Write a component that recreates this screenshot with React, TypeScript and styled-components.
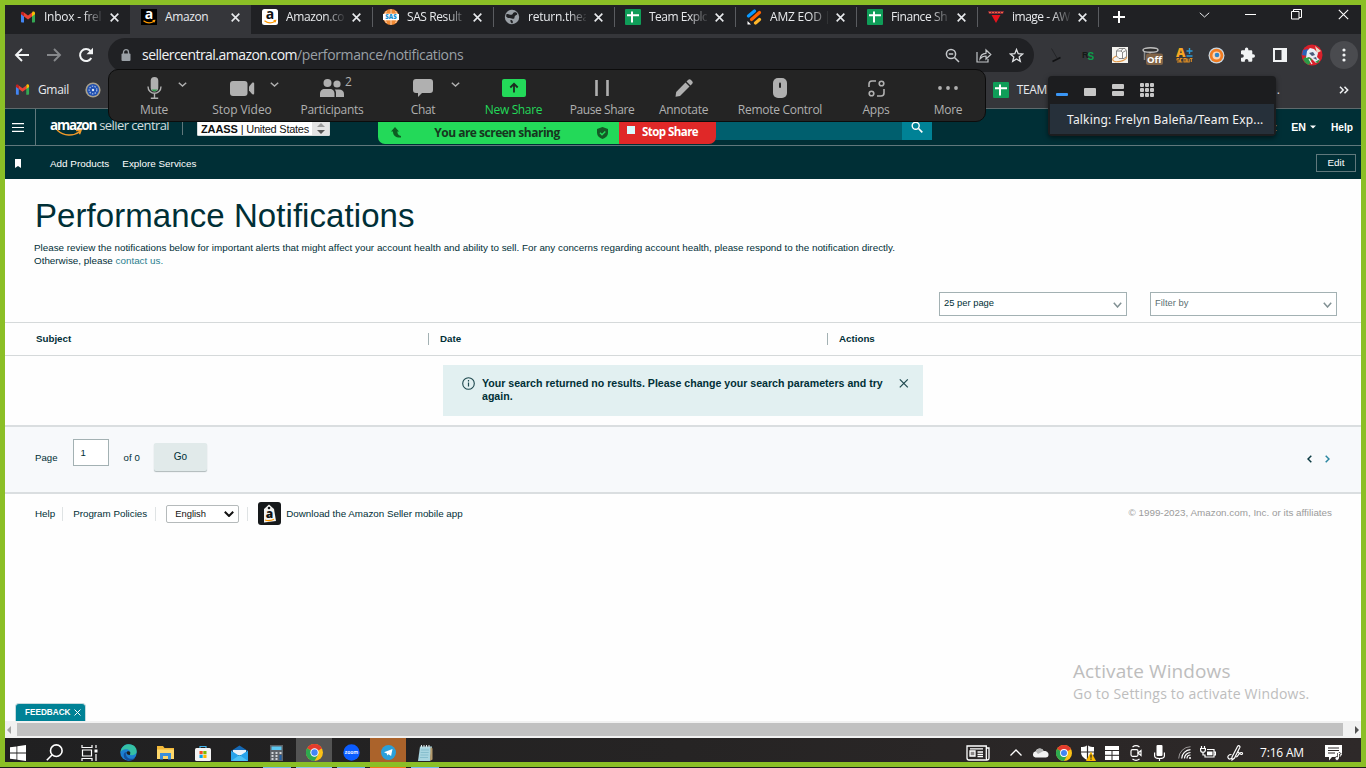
import React from "react";
import styled, { createGlobalStyle, css } from "styled-components";

const GlobalStyle = createGlobalStyle`
  * { box-sizing: border-box; }
  html, body { margin: 0; padding: 0; overflow: hidden; background: #1b1b1b; }
  svg { display: block; flex: none; }
`;

const uiFont = `"Open Sans", "Noto Sans", sans-serif`;
const pageFont = `"Liberation Sans", Arial, sans-serif`;

/* ---------- desktop ---------- */

const Desktop = styled.div`
  position: relative;
  width: 1366px;
  height: 768px;
  overflow: hidden;
  display: flex;
  flex-direction: column;
  font-family: ${uiFont};
`;

const SharedFrame = styled.div`
  border: 5px solid #8bbf26;
  height: 767px;
  display: flex;
  flex-direction: column;
`;

const Label = styled.span<{ $size?: number; $ls?: number; $color?: string; $weight?: number }>`
  font-size: ${(p) => p.$size ?? 12}px;
  letter-spacing: ${(p) => p.$ls ?? 0}px;
  color: ${(p) => p.$color ?? "inherit"};
  font-weight: ${(p) => p.$weight ?? 400};
  white-space: nowrap;
`;

/* ---------- browser chrome ---------- */

const TabStrip = styled.div`
  height: 29px;
  flex: none;
  display: flex;
  background: #202124;
  padding-left: 4px;
  color: #e8eaed;
`;

const Tab = styled.div<{ $active?: boolean; $line?: boolean }>`
  position: relative;
  width: 121px;
  height: 29px;
  flex: none;
  display: flex;
  align-items: center;
  padding: 0 9px 5px 11px;
  ${(p) =>
    p.$active &&
    css`
      background: #35363a;
    `}
  ${(p) =>
    p.$line &&
    css`
      &::after {
        content: "";
        position: absolute;
        right: -1px;
        top: 2px;
        height: 20px;
        width: 1px;
        background: #5a5c60;
      }
    `}
`;

const TabTitle = styled.span<{ $fade?: boolean; $ls?: number }>`
  width: 58px;
  margin-left: 8px;
  margin-right: 8px;
  font-size: 12px;
  line-height: 16px;
  letter-spacing: ${(p) => p.$ls ?? -0.4}px;
  overflow: hidden;
  white-space: nowrap;
  ${(p) =>
    p.$fade &&
    css`
      mask-image: linear-gradient(90deg, #000 68%, transparent 104%);
    `}
`;

const WindowButtons = styled.div`
  flex: 1;
  display: flex;
  align-items: center;
  padding-bottom: 10px;
  justify-content: flex-end;
  padding-right: 12px;
`;

const WindowGlyph = styled.div<{ $gap: number }>`
  margin-left: ${(p) => p.$gap}px;
`;

const Toolbar = styled.div`
  height: 40px;
  flex: none;
  display: flex;
  align-items: center;
  background: #35363a;
  padding: 2px 1px 0 9px;
`;

const NavSlot = styled.div<{ $w: number }>`
  width: ${(p) => p.$w}px;
  display: flex;
  flex: none;
`;

const AddressBar = styled.div`
  width: 926px;
  height: 34px;
  flex: none;
  border-radius: 17px;
  background: #202124;
  display: flex;
  align-items: center;
  padding: 0 2px 0 13px;
  color: #f1f3f4;
`;

const UrlText = styled.span`
  margin: -1px 0 0 11px;
  flex: 1;
  font-size: 14px;
  letter-spacing: -0.54px;
  white-space: nowrap;
  em {
    font-style: normal;
    color: #9aa0a6;
    letter-spacing: -0.36px;
  }
`;

const AddressIcon = styled.div`
  width: 32px;
  display: flex;
  justify-content: center;
`;

const Extensions = styled.div`
  display: flex;
  margin-left: 6px;
`;

const ExtSlot = styled.div`
  width: 32px;
  height: 34px;
  display: flex;
  align-items: center;
  justify-content: center;
`;

const MenuCircle = styled.div`
  width: 28px;
  height: 28px;
  border-radius: 50%;
  background: #4a4b4f;
  display: flex;
  align-items: center;
  justify-content: center;
`;

const BookmarksBar = styled.div`
  height: 35px;
  flex: none;
  display: flex;
  align-items: center;
  background: #35363a;
  border-bottom: 1px solid #5f6a6c;
  color: #e8eaed;
  padding: 0 12px 3px 10px;
`;

const Spacer = styled.div<{ $w?: number }>`
  ${(p) => (p.$w === undefined ? "flex: 1;" : `width: ${p.$w}px; flex: none;`)}
`;

/* ---------- seller central header ---------- */

const SiteHeader = styled.header`
  height: 37px;
  flex: none;
  display: flex;
  align-items: stretch;
  background: #002f36;
  border-bottom: 1px solid #60787c;
  color: #fff;
  font-family: ${pageFont};
`;

const MenuButton = styled.div`
  width: 31px;
  border-right: 1px solid #60787c;
  display: flex;
  align-items: center;
  padding-left: 7px;
`;

const Brand = styled.div`
  position: relative;
  width: 146px;
  height: 36px;
  padding: 7px 0 0 14px;
  font-family: ${uiFont};
  display: flex;
  align-items: baseline;
  line-height: 18px;
  svg {
    position: absolute;
    left: 20px;
    top: 20px;
  }
`;

const BrandRule = styled.div`
  width: 1px;
  height: 13px;
  margin-top: 13px;
  margin-right: 14px;
  background: #60787c;
`;

const AccountSelect = styled.div`
  width: 133px;
  height: 15px;
  margin-top: 12px;
  background: #fff;
  color: #002f36;
  border: 1px solid #d5dbdb;
  border-radius: 1px;
  display: flex;
  align-items: center;
  padding-left: 3px;
`;

const Stepper = styled.div`
  margin-left: auto;
  width: 17px;
  height: 13px;
  background: #e3e3e3;
  display: flex;
  align-items: center;
  justify-content: center;
`;

const SearchField = styled.div`
  width: 507px;
  height: 31px;
  margin-left: 65px;
  background: #005f6e;
`;

const SearchButton = styled.div`
  width: 30px;
  height: 31px;
  background: #008296;
  display: flex;
  justify-content: center;
  padding-top: 12px;
`;

const HeaderLinks = styled.div`
  margin-left: auto;
  display: flex;
  align-items: center;
  padding-right: 8px;
`;

const QuickLinks = styled.nav`
  height: 33px;
  flex: none;
  display: flex;
  align-items: center;
  background: #002f36;
  color: #fff;
  font-family: ${pageFont};
  padding: 1px 5px 0 10px;
`;

const EditButton = styled.div`
  width: 40px;
  height: 18px;
  margin-bottom: 1px;
  border: 1px solid #60787c;
  display: flex;
  align-items: center;
  justify-content: center;
`;

/* ---------- page body ---------- */

const Page = styled.main`
  position: relative;
  height: 542px;
  flex: none;
  background: #fefefe;
  color: #002f36;
  font-family: ${pageFont};
  display: flex;
  flex-direction: column;
`;

const Intro = styled.div`
  height: 113px;
  flex: none;
  padding: 18px 0 0 29px;
`;

const Title = styled.h1`
  margin: 0 0 0 1px;
  font-size: 33px;
  line-height: 38px;
  font-weight: 400;
  letter-spacing: 0.07px;
`;

const Paragraph = styled.p`
  margin: 6px 0 0;
  font-size: 9.85px;
  line-height: 13px;
  letter-spacing: 0;
  a {
    color: #2a7f8f;
  }
`;

const Filters = styled.div`
  height: 30px;
  flex: none;
  display: flex;
  justify-content: flex-end;
  gap: 23px;
  padding-right: 24px;
`;

const Dropdown = styled.div<{ $muted?: boolean }>`
  width: ${(p) => (p.$muted ? 187 : 188)}px;
  height: 24px;
  border: 1px solid #a3b1b3;
  background: #fff;
  color: ${(p) => (p.$muted ? "#5c6f72" : "#002f36")};
  display: flex;
  align-items: center;
  justify-content: space-between;
  padding: 0 4px 3px 4px;
  svg {
    margin-top: 4px;
  }
`;

const TableHead = styled.div`
  height: 34px;
  flex: none;
  border-top: 1px solid #d5d9da;
  border-bottom: 1px solid #d5d9da;
  display: flex;
  align-items: center;
`;

const HeadCell = styled.div<{ $w?: number; $first?: boolean }>`
  ${(p) => (p.$w ? `width: ${p.$w}px;` : "flex: 1;")}
  height: 12px;
  line-height: 12px;
  font-size: 9.75px;
  font-weight: 700;
  padding-left: ${(p) => (p.$first ? 31 : 11)}px;
  border-left: ${(p) => (p.$first ? 0 : 1)}px solid #a3b1b3;
`;

const ResultArea = styled.div`
  height: 69px;
  flex: none;
  padding-top: 9px;
  display: flex;
  justify-content: center;
`;

const Notice = styled.div`
  width: 480px;
  height: 51px;
  background: #e2f0f1;
  display: flex;
  padding: 12px 14px 0 19px;
`;

const NoticeText = styled.div`
  width: 410px;
  margin-left: 7px;
  font-size: 10.6px;
  line-height: 13px;
  font-weight: 700;
`;

const Pager = styled.div`
  height: 69px;
  flex: none;
  border-top: 2px solid #dadee0;
  border-bottom: 2px solid #dadee0;
  background: #f7f9fb;
  display: flex;
  align-items: flex-start;
  padding: 0 29px 0 30px;
`;

const PageInput = styled.div`
  width: 36px;
  height: 27px;
  margin: 12px 15px 0 15px;
  border: 1px solid #a3b1b3;
  background: #fff;
  font-size: 9.6px;
  line-height: 26px;
  padding-left: 7px;
`;

const PagerLabel = styled.span`
  font-size: 9.6px;
  line-height: 12px;
  margin-top: 25px;
  letter-spacing: 0.05px;
`;

const GoButton = styled.div`
  width: 53px;
  height: 28px;
  margin: 16px 0 0 14px;
  border-radius: 2px;
  background: #e1eaea;
  box-shadow: 0 1px 1px #aeb8ba;
  font-size: 10px;
  line-height: 28px;
  text-align: center;
`;

const Arrows = styled.div`
  margin: 28px 2px 0 auto;
  display: flex;
  gap: 13px;
`;

const Footer = styled.footer`
  height: 42px;
  flex: none;
  display: flex;
  align-items: center;
  padding: 0 29px 3px 30px;
`;

const FootRule = styled.div<{ $l: number; $r: number }>`
  width: 1px;
  height: 14px;
  background: #dfe3e4;
  margin: 0 ${(p) => p.$r}px 0 ${(p) => p.$l}px;
`;

const LanguageSelect = styled.div`
  width: 73px;
  height: 18px;
  border: 1px solid #b5babb;
  border-radius: 2px;
  background: #fff;
  display: flex;
  align-items: center;
  justify-content: space-between;
  padding: 0 4px 0 8px;
`;

const Copyright = styled.div`
  margin: 0 0 4px auto;
  line-height: 12px;
`;

const Watermark = styled.div`
  position: absolute;
  left: 1068px;
  top: 479px;
  font-family: ${uiFont};
  color: #bdbdbd;
  display: flex;
  flex-direction: column;
`;

const Feedback = styled.div`
  position: absolute;
  left: 10px;
  bottom: 0;
  width: 71px;
  height: 18px;
  border: 1px solid #c5dadd;
  border-bottom: 0;
  border-radius: 4px 4px 0 0;
  background: #008296;
  color: #fff;
  display: flex;
  align-items: center;
  padding-left: 9px;
  gap: 3px;
`;

const ScrollBar = styled.div`
  height: 17px;
  flex: none;
  background: #f1f1f1;
  display: flex;
  align-items: center;
  padding: 0 1px;
`;

const Thumb = styled.div`
  width: 1327px;
  height: 13px;
  margin: 0 12px 0 6px;
  background: #c1c1c1;
`;

/* ---------- taskbar ---------- */

const Taskbar = styled.div`
  height: 24px;
  flex: none;
  display: flex;
  align-items: center;
  background: linear-gradient(90deg, #202021, #262424 50%, #2e2929);
  color: #fff;
`;

const TaskSlot = styled.div<{ $w: number; $bg?: string; $mr?: number }>`
  width: ${(p) => p.$w}px;
  height: 24px;
  flex: none;
  margin-right: ${(p) => p.$mr ?? 0}px;
  background: ${(p) => p.$bg ?? "transparent"};
  display: flex;
  align-items: center;
  justify-content: center;
  padding-top: 5px;
`;

const RunningStrip = styled.div`
  height: 1px;
  display: flex;
  background: #1d1b1b;
  padding-left: 263px;
  gap: 5px;
`;

const Running = styled.div<{ $w: number; $c: string }>`
  width: ${(p) => p.$w}px;
  background: ${(p) => p.$c};
`;

/* ---------- floating meeting controls ---------- */

const MeetingBar = styled.div`
  position: absolute;
  left: 108px;
  top: 69px;
  width: 878px;
  height: 53px;
  border: 1px solid #0c0c0c;
  border-radius: 10px;
  background: #242424;
  padding-left: 10px;
  display: flex;
`;

const MeetingItem = styled.div<{ $w: number; $ml?: number; $green?: boolean }>`
  position: relative;
  width: ${(p) => p.$w}px;
  margin-left: ${(p) => p.$ml ?? 0}px;
  flex: none;
  display: flex;
  flex-direction: column;
  align-items: center;
  color: ${(p) => (p.$green ? "#23d959" : "#b0b0b0")};
`;

const MeetingIcon = styled.div`
  height: 36px;
  display: flex;
  align-items: center;
  justify-content: center;
`;

const MeetingLabel = styled.span<{ $ls?: number }>`
  margin-top: -5px;
  font-size: 12px;
  line-height: 17px;
  letter-spacing: ${(p) => p.$ls ?? -0.28}px;
  white-space: nowrap;
`;

const Corner = styled.div<{ $dx: number; $top: number }>`
  position: absolute;
  left: calc(50% + ${(p) => p.$dx}px);
  top: ${(p) => p.$top}px;
  font-size: 12px;
  line-height: 14px;
`;

const ShareBanner = styled.div`
  position: absolute;
  left: 378px;
  top: 121px;
  width: 338px;
  height: 23px;
  display: flex;
  border-radius: 0 0 7px 7px;
  overflow: hidden;
  border-top: 1px solid #0c0c0c;
`;

const SharingStatus = styled.div`
  width: 241px;
  background: #23d959;
  color: #17361f;
  display: flex;
  align-items: center;
  justify-content: space-between;
  padding: 0 11px 1px 13px;
  span {
    margin-right: 5px;
  }
`;

const StopShare = styled.div`
  flex: 1;
  background: #e02828;
  color: #fff;
  display: flex;
  align-items: center;
  padding: 0 0 3px 8px;
  gap: 7px;
`;

const StopSquare = styled.div`
  width: 8px;
  height: 8px;
  margin-bottom: 3px;
  background: #d8fbff;
`;

const TalkingPanel = styled.div`
  position: absolute;
  left: 1048px;
  top: 76px;
  width: 228px;
  height: 60px;
  border-radius: 4px;
  background: #1c1d1f;
  padding: 0 2px 2px;
  box-shadow: 0 2px 5px rgba(0, 0, 0, 0.5);
`;

const ViewModes = styled.div`
  height: 28px;
  display: flex;
  align-items: center;
  padding-left: 6px;
  gap: 16px;
`;

const Talking = styled.div`
  height: 30px;
  background: #26303a;
  color: #f2f2f2;
  padding-left: 17px;
  display: flex;
  align-items: center;
  font-family: "Noto Sans", sans-serif;
`;

/* ---------- icons ---------- */

const Close = ({ s = 8, w = 1.6, c = "#e8eaed" }: { s?: number; w?: number; c?: string }) => (
  <svg width={s} height={s} viewBox="0 0 8 8">
    <path d="M.6.6l6.8 6.8M7.4.6L.6 7.4" stroke={c} strokeWidth={(w * 8) / s} fill="none" />
  </svg>
);

const Chevron = ({ w = 8, h = 5, c = "#b0b0b0", sw = 1.3 }: { w?: number; h?: number; c?: string; sw?: number }) => (
  <svg width={w} height={h} viewBox={`0 0 ${w} ${h}`}>
    <path d={`M.8 .8L${w / 2} ${h - 1}L${w - 0.8} .8`} stroke={c} strokeWidth={sw} fill="none" />
  </svg>
);

const GmailIcon = ({ s = 16 }: { s?: number }) => (
  <svg width={s} height={s} viewBox="0 0 16 16">
    <path d="M1 3.6v9.1c0 .5.4.8.8.8H4V6.8z" fill="#4285f4" />
    <path d="M15 3.6v9.1c0 .5-.4.8-.8.8H12V6.8z" fill="#34a853" />
    <path d="M12 3.8v3.6l3-2.2V4c0-1.500-1.600-2-2.600-1.200z" fill="#fbbc04" />
    <path d="M1 5.200l3 2.200V3.800l-.5-.8C2.500 2.300 1 2.700 1 4z" fill="#c5221f" />
    <path d="M4 7.400V3.600l4 3 4-3v3.800l-4 3z" fill="#ea4335" />
  </svg>
);

const AmazonIcon = ({ dark }: { dark?: boolean }) => (
  <svg width="16" height="16" viewBox="0 0 16 16">
    <rect width="16" height="16" rx={dark ? 0 : 2.5} fill={dark ? "#000" : "#fff"} />
    <text x="8" y="10" textAnchor="middle" fontFamily="Open Sans" fontWeight="700" fontSize="14" fill={dark ? "#fff" : "#111"}>a</text>
    <path d="M2.500 11.800c3.200 2.400 7.600 2.400 10.600.4M11.600 11.600l2-.2-.6 1.900" stroke="#ff9900" strokeWidth="1.300" fill="none" />
  </svg>
);

const SasIcon = () => (
  <svg width="16" height="16" viewBox="0 0 16 16">
    <circle cx="8" cy="8" r="8" fill="#f08a35" />
    <path d="M8 0v16M3.500 2c-2 4-2 8 0 12M12.500 2c2 4 2 8 0 12M1 5h14M1 11h14" stroke="#fde3cb" strokeWidth=".8" fill="none" />
    <rect x="0" y="5" width="16" height="6" fill="#fff" />
    <text x="8" y="10.200" textAnchor="middle" fontFamily="Open Sans" fontWeight="800" fontSize="6" fill="#1a8fd0">SAS</text>
  </svg>
);

const GlobeIcon = () => (
  <svg width="16" height="16" viewBox="0 0 16 16">
    <circle cx="8" cy="8" r="7.200" fill="#9aa0a6" />
    <path d="M2.500 5c2-.4 3 1.200 5 .8s1-2.300 3-2.500 2 .6 2.700 1.300c.3 1.600-1.500 1.200-2.300 2.400S11 9.800 9.500 9.800 7 8.600 5 9 3 7.800 2 7.600zM6.500 11c1.500 0 2.500.4 2.400 2.600l-.8.900c-1-.6-2.100-2-1.600-3.500z" fill="#202124" />
  </svg>
);

const SheetsIcon = () => (
  <svg width="16" height="16" viewBox="0 0 16 16">
    <rect width="16" height="16" rx="1" fill="#0f9d58" />
    <path d="M2 6.200h12M7 2.500v11" stroke="#fff" strokeWidth="2" />
  </svg>
);

const StripeIcon = () => (
  <svg width="16" height="16" viewBox="0 0 16 16" strokeWidth="3.200" strokeLinecap="round">
    <path d="M2.500 7L8.500 2" stroke="#0a99ff" />
    <path d="M5.500 10.500L13.500 3.500" stroke="#ff6100" />
    <path d="M9.500 14L13.500 10.500" stroke="#ffb629" />
    <path d="M1.500 12v3.500H5z" fill="#fff" />
  </svg>
);

const BadgeIcon = () => (
  <svg width="16" height="16" viewBox="0 0 16 16">
    <path d="M0 2h16l-1 3H1z" fill="#8c2a3a" />
    <path d="M1 3.500h14" stroke="#f06a3c" strokeDasharray="2 1" />
    <path d="M3.500 6h9l-4.500 8z" fill="#e8141d" />
  </svg>
);

const ChromeIcon = ({ s = 16 }: { s?: number }) => (
  <svg width={s} height={s} viewBox="0 0 16 16">
    <circle cx="8" cy="8" r="8" fill="#fbc116" />
    <path d="M8 8L1.070 4A8 8 0 0 1 14.930 4z" fill="#e33b2e" />
    <path d="M8 8L14.930 4H8z" fill="#e33b2e" />
    <path d="M1.070 4A8 8 0 0 0 8 16l3.400-6z" fill="#2da94f" />
    <circle cx="8" cy="8" r="3.900" fill="#fff" />
    <circle cx="8" cy="8" r="3" fill="#4285f4" />
  </svg>
);

const Back = ({ c, flip }: { c: string; flip?: boolean }) => (
  <svg width="16" height="14" viewBox="0 0 16 14" transform={flip ? "scale(-1 1)" : undefined}>
    <path d="M15 7H2M8 1L2 7l6 6" stroke={c} strokeWidth="1.900" fill="none" />
  </svg>
);

const Mic = ({ c = "#b0b0b0" }: { c?: string }) => (
  <svg width="15" height="22" viewBox="0 0 15 22">
    <rect x="3.700" y="0" width="7.600" height="14.500" rx="3.800" fill={c} />
    <path d="M1 9.500c0 9 13 9 13 0M7.500 16.500V21M3.800 21.200h7.400" stroke={c} strokeWidth="1.400" fill="none" />
    <path d="M4.500 12.500c1 2.400 5 2.400 6 0z" fill="#2e9a4c" />
  </svg>
);

type TabInfo = { title: string; icon: React.ReactNode; fade?: boolean; active?: boolean; line?: boolean; ls?: number };

const tabs: TabInfo[] = [
  { title: "Inbox - frel", icon: <GmailIcon />, fade: true, ls: -0.25 },
  { title: "Amazon", icon: <AmazonIcon dark />, active: true },
  { title: "Amazon.co", icon: <AmazonIcon />, fade: true, line: true },
  { title: "SAS Result", icon: <SasIcon />, fade: true, line: true },
  { title: "return.thea", icon: <GlobeIcon />, fade: true, line: true, ls: -0.25 },
  { title: "Team Explo", icon: <SheetsIcon />, fade: true, line: true, ls: -0.5 },
  { title: "AMZ EOD |", icon: <StripeIcon />, fade: true, line: true, ls: -0.2 },
  { title: "Finance Sh", icon: <SheetsIcon />, fade: true, line: true },
  { title: "image - AW", icon: <BadgeIcon />, fade: true, line: true, ls: -0.5 },
];

const BrowserChrome = () => (
  <>
    <TabStrip>
      {tabs.map((t, i) => (
        <Tab key={i} $active={t.active} $line={t.line}>
          {t.icon}
          <TabTitle $fade={t.fade} $ls={t.ls}>{t.title}</TabTitle>
          <Close s={9} />
        </Tab>
      ))}
      <Spacer $w={15} />
      <svg width="12" height="24" viewBox="0 0 12 24"><path d="M0 12h12M6 6v12" stroke="#fff" strokeWidth="2" /></svg>
      <WindowButtons>
        <WindowGlyph $gap={0}><Chevron w={11} h={6} c="#e8eaed" sw={1} /></WindowGlyph>
        <WindowGlyph $gap={35}><svg width="11" height="3"><path d="M0 1.500h11" stroke="#fff" /></svg></WindowGlyph>
        <WindowGlyph $gap={35}>
          <svg width="11" height="11" viewBox="0 0 11 11"><path d="M.5 2.500h7.500v7.500H.5zM2.500 2.500V.5h8v8H8" fill="none" stroke="#fff" /></svg>
        </WindowGlyph>
        <WindowGlyph $gap={36}><Close s={11} w={1.100} c="#fff" /></WindowGlyph>
      </WindowButtons>
    </TabStrip>
    <Toolbar>
      <NavSlot $w={32}><Back c="#f1f3f4" /></NavSlot>
      <NavSlot $w={32}><Back c="#86888b" flip /></NavSlot>
      <NavSlot $w={30}>
        <svg width="16" height="16" viewBox="0 0 16 16">
          <path d="M13.300 11A6 6 0 1 1 12.500 4" stroke="#f1f3f4" strokeWidth="2" fill="none" />
          <path d="M15 .8v6.500H8.500z" fill="#f1f3f4" />
        </svg>
      </NavSlot>
      <AddressBar>
        <svg width="10" height="13" viewBox="0 0 10 13">
          <rect x="0.500" y="4.500" width="9" height="7.500" rx="1" fill="#9aa0a6" />
          <path d="M2.500 5V3.200a2.500 2.500 0 0 1 5 0V5" stroke="#9aa0a6" strokeWidth="1.300" fill="none" />
        </svg>
        <UrlText>sellercentral.amazon.com<em>/performance/notifications</em></UrlText>
        <AddressIcon>
          <svg width="15" height="15" viewBox="0 0 15 15" stroke="#c4c7ca" fill="none" strokeWidth="1.500">
            <circle cx="6" cy="6" r="4.600" /><path d="M9.500 9.500l4.500 4.500M3.800 6h4.400" />
          </svg>
        </AddressIcon>
        <AddressIcon>
          <svg width="16" height="15" viewBox="0 0 16 15" stroke="#c4c7ca" fill="none" strokeWidth="1.200">
            <path d="M1 4v10h11v-3" /><path d="M4 11c.3-3.500 2.500-5.500 6-5.700V2l4.800 4.500L10 11V8C7.500 8 5.500 9 4 11z" />
          </svg>
        </AddressIcon>
        <AddressIcon>
          <svg width="15" height="15" viewBox="0 0 15 15" stroke="#e1e3e5" fill="none" strokeWidth="1.300">
            <path d="M7.500 1.500l1.700 4.200 4.500.3-3.500 2.900 1.100 4.400-3.800-2.400-3.800 2.400 1.100-4.400L1.300 6l4.500-.3z" />
          </svg>
        </AddressIcon>
      </AddressBar>
      <Extensions>
        <ExtSlot><svg width="12" height="15" viewBox="0 0 12 15"><path d="M1.500 .5L7 10" stroke="#242528" /><path d="M2.500 13.500l8-4" stroke="#111214" strokeWidth="1.600" /></svg></ExtSlot>
        <ExtSlot>
          <svg width="16" height="16" viewBox="0 0 16 16">
            <text x="2" y="11" fontFamily="Liberation Sans" fontWeight="700" fontSize="9" fill="#141a17">R<tspan fontSize="10" x="7.500" dy="2" fill="#0c9d4b">S</tspan></text>
          </svg>
        </ExtSlot>
        <ExtSlot>
          <svg width="16" height="16" viewBox="0 0 16 16">
            <rect width="16" height="16" fill="#f4f3ef" />
            <ellipse cx="7.500" cy="11.500" rx="7" ry="3" fill="none" stroke="#e39a4b" strokeWidth="1.300" transform="rotate(-12 7 11)" />
            <path d="M4.500 4l2.500-2.500h6l1.500 2v6l-2.500 2H7L4.500 9z" fill="#fbfbfa" stroke="#6d6d6d" strokeWidth=".8" />
            <path d="M4.500 4H9l1.500 1.500v6M9 4l2-2.500M10.500 5.500l3.500-2" stroke="#6d6d6d" fill="none" strokeWidth=".8" />
          </svg>
        </ExtSlot>
        <ExtSlot>
          <svg width="24" height="22" viewBox="0 0 24 22">
            <path d="M4.500 7v9M10 7v5" stroke="#8a8a8a" strokeWidth="1.500" />
            <ellipse cx="10.500" cy="6" rx="7.500" ry="2.300" fill="#2c2c2c" stroke="#bdbdbd" strokeWidth="1.500" />
            <rect x="6" y="9.500" width="17" height="11.500" rx="2" fill="#806346" />
            <text x="14.500" y="18.500" textAnchor="middle" fontFamily="Open Sans" fontWeight="700" fontSize="9.500" fill="#fff">Off</text>
          </svg>
        </ExtSlot>
        <ExtSlot>
          <svg width="17" height="16" viewBox="0 0 17 16">
            <text x="0" y="10" fontFamily="Open Sans" fontWeight="800" fontSize="13" fill="#f6a623">A</text>
            <path d="M10.500 4h6M13.500 1v6M10.500 9h6" stroke="#2b9bd8" strokeWidth="1.400" />
            <path d="M1 11.500h2.300M1 11.500v1.500h2.300v2H1M6.500 11.500H4.600V15h1.900M8 11.500h2V15H8zM11.200 11.500V15h2v-3.500M14 11.500h2.500M15.300 11.500V15" stroke="#e08e24" strokeWidth="1.100" fill="none" />
          </svg>
        </ExtSlot>
        <ExtSlot>
          <svg width="17" height="17" viewBox="0 0 17 17">
            <circle cx="8.500" cy="8.500" r="8" fill="#c8d7e2" /><circle cx="8.500" cy="8.500" r="6.800" fill="#f07c22" />
            <circle cx="8.500" cy="8.500" r="4" fill="#fbd3b2" /><circle cx="9" cy="8" r="2.300" fill="#2e86c9" />
          </svg>
        </ExtSlot>
        <ExtSlot>
          <svg width="16" height="16" viewBox="0 0 16 16">
            <path d="M13.300 7.300h-1V4.600c0-.8-.6-1.300-1.300-1.300H8.300v-1a1.700 1.700 0 0 0-3.400 0v1H2.300C1.500 3.300 1 3.900 1 4.600v2.600h1a1.800 1.800 0 0 1 0 3.600H1v2.600c0 .7.600 1.300 1.300 1.300h2.500v-1a1.800 1.800 0 0 1 3.600 0v1H11c.7 0 1.300-.6 1.300-1.300v-2.700h1a1.700 1.700 0 0 0 0-3.400z" fill="#f1f3f4" />
          </svg>
        </ExtSlot>
        <ExtSlot>
          <svg width="14" height="14" viewBox="0 0 14 14"><path d="M1 1h12v12H1z" fill="none" stroke="#f1f3f4" strokeWidth="2" /><path d="M8.500 1H13v12H8.500z" fill="#f1f3f4" /></svg>
        </ExtSlot>
        <ExtSlot>
          <svg width="22" height="22" viewBox="0 0 22 22">
            <circle cx="11" cy="11" r="10.500" fill="#d9202b" />
            <path d="M2 15a10 10 0 0 0 6 6l3-6-5-3z" fill="#2c9b46" /><path d="M2 6l5-1-1 7-5-1z" fill="#2b62b8" />
            <path d="M14 2l6 5-4 2z" fill="#e9d8c4" />
            <path d="M6 7l3-3 4 1 4 4-1 4 3 3-4 3-5-5-2-1-3 1z" fill="#e8eef5" /><path d="M8 9l4-1 2 3-3 1zM12 14l3-1 1 3z" fill="#4a5c7c" />
            <path d="M14 18l5-3-2 4z" fill="#2c9b46" /><path d="M8 15l3 5" stroke="#f2f2f2" strokeWidth="1.200" />
          </svg>
        </ExtSlot>
        <ExtSlot>
          <MenuCircle>
            <svg width="4" height="14" viewBox="0 0 4 14" fill="#f1f3f4"><circle cx="2" cy="2" r="1.600" /><circle cx="2" cy="7" r="1.600" /><circle cx="2" cy="12" r="1.600" /></svg>
          </MenuCircle>
        </ExtSlot>
      </Extensions>
    </Toolbar>
    <BookmarksBar>
      <GmailIcon s={15} />
      <Spacer $w={8} />
      <Label $size={12} $ls={-0.35}>Gmail</Label>
      <Spacer $w={16} />
      <svg width="16" height="16" viewBox="0 0 16 16">
        <circle cx="8" cy="8" r="7.600" fill="#a8a08c" /><circle cx="8" cy="8" r="6" fill="#1f4fb0" />
        <circle cx="8" cy="8" r="3.800" fill="none" stroke="#9db6e6" strokeWidth="1.300" strokeDasharray="1.500 1.200" /><circle cx="8" cy="8" r="1.200" fill="#dfe6f4" />
      </svg>
      <Spacer $w={892} />
      <SheetsIcon />
      <Spacer $w={8} />
      <Label $size={12} $ls={-0.4}>TEAM</Label>
      <Spacer />
      <Label>.</Label>
      <Spacer $w={59} />
      <svg width="10" height="8" viewBox="0 0 10 8"><path d="M1 .8L4.200 4 1 7.200M5.500.8L8.700 4 5.500 7.200" stroke="#f1f3f4" strokeWidth="1.500" fill="none" /></svg>
    </BookmarksBar>
  </>
);

const Header = () => (
  <>
    <SiteHeader>
      <MenuButton>
        <svg width="12" height="9" viewBox="0 0 12 9"><path d="M0 .7h12M0 4.500h12M0 8.300h12" stroke="#fff" strokeWidth="1.200" /></svg>
      </MenuButton>
      <Brand>
        <Label $size={13.500} $weight={700} $ls={-1.200}>amazon</Label>
        <Spacer $w={3} />
        <Label $size={13} $ls={-0.580} $color="#d3dcdd">seller central</Label>
        <svg width="27" height="8" viewBox="0 0 27 8"><path d="M1 1c7 6.500 16 6.500 23 1.500M20 1.500l5-.2-1.500 4" stroke="#f19a2a" strokeWidth="1.500" fill="none" /></svg>
      </Brand>
      <BrandRule />
      <AccountSelect>
        <Label $size={11} $weight={700} $ls={-0.1} $color="#111">ZAASS</Label>
        <Spacer $w={3} />
        <Label $size={11} $ls={-0.25} $color="#111">| United States</Label>
        <Stepper>
          <svg width="8" height="11" viewBox="0 0 8 11"><path d="M4 0l4 4H0z" fill="#9a9a9a" /><path d="M4 11l4-4H0z" fill="#555" /></svg>
        </Stepper>
      </AccountSelect>
      <SearchField />
      <SearchButton>
        <svg width="12" height="12" viewBox="0 0 12 12"><circle cx="4.700" cy="4.700" r="3.500" fill="none" stroke="#fff" strokeWidth="1.400" /><path d="M7.500 7.500L11.300 11.300" stroke="#fff" strokeWidth="1.700" /></svg>
      </SearchButton>
      <HeaderLinks>
        <Label $size={10} $color="#b8c4c6">:</Label>
        <Spacer $w={14} />
        <Label $size={10.6} $weight={700}>EN</Label>
        <Spacer $w={4} />
        <svg width="6" height="4"><path d="M0 .5h6L3 3.500z" fill="#fff" /></svg>
        <Spacer $w={15} />
        <Label $size={10.2} $weight={700}>Help</Label>
      </HeaderLinks>
    </SiteHeader>
    <QuickLinks>
      <svg width="6" height="9" viewBox="0 0 6 9"><path d="M0 0h6v9L3 7 0 9z" fill="#fff" /></svg>
      <Spacer $w={29} />
      <Label $size={9.900}>Add Products</Label>
      <Spacer $w={13} />
      <Label $size={9.900}>Explore Services</Label>
      <Spacer />
      <EditButton><Label $size={9.900}>Edit</Label></EditButton>
    </QuickLinks>
  </>
);

const SellerIcon = () => (
  <svg width="23" height="23" viewBox="0 0 23 23">
    <rect width="23" height="23" rx="3" fill="#16191b" />
    <path d="M6 7l5-4.500L16 7l2 12-12 1.500z" fill="#f4f4f2" />
    <circle cx="11" cy="6" r="1.300" fill="#16191b" />
    <text x="11.500" y="16" textAnchor="middle" fontFamily="Open Sans" fontWeight="800" fontSize="12" fill="#111">a</text>
    <path d="M7 18c3 1 6 .8 9-.8" stroke="#ff9900" strokeWidth="1.300" fill="none" />
  </svg>
);

const Notifications = () => (
  <Page>
    <Intro>
      <Title>Performance Notifications</Title>
      <Paragraph>
        Please review the notifications below for important alerts that might affect your account health and ability to sell. For any concerns regarding account health, please respond to the notification directly.
        <br />
        Otherwise, please <a>contact us.</a>
      </Paragraph>
    </Intro>
    <Filters>
      <Dropdown><Label $size={9.4}>25 per page</Label><Chevron w={9} h={6} c="#829194" sw={1.500} /></Dropdown>
      <Dropdown $muted><Label $size={9.4}>Filter by</Label><Chevron w={9} h={6} c="#829194" sw={1.500} /></Dropdown>
    </Filters>
    <TableHead>
      <HeadCell $w={423} $first>Subject</HeadCell>
      <HeadCell $w={399}>Date</HeadCell>
      <HeadCell>Actions</HeadCell>
    </TableHead>
    <ResultArea>
      <Notice>
        <svg width="13" height="13" viewBox="0 0 13 13"><circle cx="6.500" cy="6.500" r="5.800" fill="none" stroke="#1d474d" strokeWidth="1.100" /><path d="M6.500 5.500v4M6.500 3v1.400" stroke="#1d474d" strokeWidth="1.200" /></svg>
        <NoticeText>Your search returned no results. Please change your search parameters and try again.</NoticeText>
        <Spacer />
        <svg width="10" height="13" viewBox="0 0 10 13"><path d="M.8 2.300l8 8M8.800 2.300l-8 8" stroke="#1d474d" strokeWidth="1.200" /></svg>
      </Notice>
    </ResultArea>
    <Pager>
      <PagerLabel>Page</PagerLabel>
      <PageInput>1</PageInput>
      <PagerLabel>of 0</PagerLabel>
      <GoButton>Go</GoButton>
      <Arrows>
        <svg width="5" height="8" viewBox="0 0 5 8"><path d="M4.300.7L1 4l3.300 3.300" stroke="#0b3a42" strokeWidth="1.500" fill="none" /></svg>
        <svg width="5" height="8" viewBox="0 0 5 8"><path d="M.7.700L4 4 .7 7.300" stroke="#2a86a0" strokeWidth="1.500" fill="none" /></svg>
      </Arrows>
    </Pager>
    <Footer>
      <Label $size={9.8}>Help</Label>
      <FootRule $l={7} $r={10} />
      <Label $size={9.8}>Program Policies</Label>
      <FootRule $l={8} $r={10} />
      <LanguageSelect><Label $size={9.4} $color="#111">English</Label><Chevron w={10} h={6} c="#111" sw={2} /></LanguageSelect>
      <FootRule $l={8} $r={10} />
      <SellerIcon />
      <Spacer $w={5} />
      <Label $size={9.8}>Download the Amazon Seller mobile app</Label>
      <Copyright><Label $size={9.85} $color="#9b9b9b">© 1999-2023, Amazon.com, Inc. or its affiliates</Label></Copyright>
    </Footer>
    <Watermark>
      <Label $size={19} $ls={0.100}>Activate Windows</Label>
      <Label $size={14} $ls={0.200}>Go to Settings to activate Windows.</Label>
    </Watermark>
    <Feedback><Label $size={8.2} $weight={700}>FEEDBACK</Label><Close s={7} w={1} c="#fff" /></Feedback>
  </Page>
);

const TaskbarRow = () => (
  <Taskbar>
    <TaskSlot $w={26}>
      <svg width="16" height="16" viewBox="0 0 16 16" fill="#fff"><path d="M0 2.300l6.500-.9v6.100H0zM7.300 1.300L16 0v7.500H7.300zM0 8.400h6.500v6.200L0 13.700zM7.300 8.400H16V16l-8.700-1.300z" /></svg>
    </TaskSlot>
    <TaskSlot $w={46}>
      <svg width="17" height="17" viewBox="0 0 17 17" fill="none" stroke="#fff" strokeWidth="1.600"><circle cx="10.300" cy="6.700" r="5.800" /><path d="M6.200 10.800L.8 16.300" /></svg>
    </TaskSlot>
    <TaskSlot $w={25} $mr={8}>
      <svg width="17" height="16" viewBox="0 0 17 16" fill="none" stroke="#fff" strokeWidth="1.200"><path d="M1 0v2.500h10V0M1.500 5h9v6h-9zM1 16v-2.500h10V16M15 0v3M15 9v7" /><path d="M13.500 4.500h3v3h-3z" fill="#fff" stroke="none" /></svg>
    </TaskSlot>
    <TaskSlot $w={37}>
      <svg width="17" height="17" viewBox="0 0 17 17">
        <circle cx="8.500" cy="8.500" r="8.200" fill="#1c7fd0" />
        <path d="M.5 8C1.500 2 6 .3 9 .3c5 0 8 3.700 7.700 7.200-.2 2.500-2.400 3.700-4.700 3.700-1.800 0-2.600-.8-2.200-1.500C11.500 6.500 8 4.800 5 5.300 2.500 5.700 1 7 .5 8z" fill="#35c1a5" />
        <path d="M6 8c-1 4 2 7.500 7 6.700 1.200-.2 2-.8 2.500-1.300-3 4.500-9.500 4-11.300 0C3 10.500 4 8.500 6 8z" fill="#124f9c" />
        <path d="M6.500 8.200c.8-1.500 3-1.300 3.800.2.400 1-.8 1.800-.3 2.500-2 .3-3.700-.9-3.500-2.700z" fill="#1e2022" />
      </svg>
    </TaskSlot>
    <TaskSlot $w={37}>
      <svg width="17" height="15" viewBox="0 0 17 15"><path d="M0 1h6l1.500 2H17v11H0z" fill="#f3b93a" /><path d="M0 4.500h17V14H0z" fill="#ffd86b" /><path d="M3 8h11v6.500h-3V11H6v3.500H3z" fill="#3c8edb" /></svg>
    </TaskSlot>
    <TaskSlot $w={37}>
      <svg width="16" height="16" viewBox="0 0 16 16"><path d="M5 4V1.500h6V4" stroke="#45b5ec" strokeWidth="1.200" fill="none" /><rect y="3" width="16" height="13" rx="1.500" fill="#f4f4f4" /><path d="M4.500 6H7.700v3.200H4.500z" fill="#f25022" /><path d="M8.300 6h3.200v3.200H8.300z" fill="#7fba00" /><path d="M4.500 9.800H7.700V13H4.500z" fill="#00a4ef" /><path d="M8.300 9.800h3.200V13H8.300z" fill="#ffb900" /></svg>
    </TaskSlot>
    <TaskSlot $w={37}>
      <svg width="17" height="16" viewBox="0 0 17 16"><path d="M0 6l8.500-5.500L17 6z" fill="#1569b5" /><path d="M2 5h13v5H2z" fill="#e8f1f8" /><path d="M0 5.500l8.500 5.500L17 5.500V16H0z" fill="#27a3ea" /><path d="M0 16l8.500-6L17 16z" fill="#4cc2f5" /></svg>
    </TaskSlot>
    <TaskSlot $w={37} $mr={1}>
      <svg width="13" height="16" viewBox="0 0 13 16"><rect width="13" height="16" fill="#5d6268" /><path d="M1.500 1.500h10V5h-10z" fill="#5cc8f2" /><path d="M1.500 7h2v2h-2zM5.500 7h2v2h-2zM9.500 7h2v2h-2zM1.500 10h2v2h-2zM5.500 10h2v2h-2zM1.500 13h2v2h-2zM5.500 13h2v2h-2z" fill="#d0d4d8" /><path d="M9.500 10h2v5h-2z" fill="#1f5fa8" /></svg>
    </TaskSlot>
    <TaskSlot $w={36} $mr={1} $bg="#545454"><ChromeIcon s={17} /></TaskSlot>
    <TaskSlot $w={36} $mr={1}>
      <svg width="17" height="17" viewBox="0 0 17 17"><circle cx="8.500" cy="8.500" r="8.200" fill="#0b5cff" /><text x="8.500" y="10.200" textAnchor="middle" fontFamily="Open Sans" fontWeight="700" fontSize="5" fill="#e6eeff">zoom</text></svg>
    </TaskSlot>
    <TaskSlot $w={36} $bg="#ab632b">
      <svg width="15" height="15" viewBox="0 0 15 15"><circle cx="7.500" cy="7.500" r="7.500" fill="#2ba0da" /><path d="M3 7.300L11.500 4l-1.400 7-2.600-1.800-1.300 1.300-.3-2z" fill="#fff" /></svg>
    </TaskSlot>
    <TaskSlot $w={37}>
      <svg width="16" height="16" viewBox="0 0 16 16"><path d="M3 1.500h12L13 16H1z" fill="#a8d5e0" /><path d="M13.500 2L15.500 3.500v11L13 16z" fill="#b49a6d" /><path d="M4 5h8M3.700 7.500h8M3.400 10h8M3 12.500h8" stroke="#7fb8c8" strokeWidth=".8" /><path d="M4.500 0v2.500M7 0v2.500M9.500 0v2.500M12 0v2.500" stroke="#dfe7ea" /></svg>
    </TaskSlot>
    <Spacer />
    <TaskSlot $w={32} $mr={10}>
      <svg width="24" height="16" viewBox="0 0 24 16" fill="none" stroke="#fff" strokeWidth="1.300"><path d="M20.300 3H23v10c0 2.500-2.700 2.500-2.700 0V1H1v12c0 1.500 1 2 2 2h18.500" /><path d="M4 6h5v5H4z" fill="#8a8686" /><path d="M4 3.800h13M11.500 7H17M11.500 9.300H17M11.500 11.500H17" /></svg>
    </TaskSlot>
    <TaskSlot $w={24}><svg width="12" height="7" viewBox="0 0 12 7"><path d="M.5 6.500L6 1l5.500 5.500" fill="none" stroke="#fff" strokeWidth="1.300" /></svg></TaskSlot>
    <TaskSlot $w={24}><svg width="17" height="11" viewBox="0 0 17 11"><path d="M3.500 10.500a3.200 3.200 0 0 1 .2-6.300C5 1 10 .5 11.500 4c3.500-.6 5.500 2 5 4.200-.3 1.300-1.200 2.300-2.700 2.300z" fill="#f2f2f2" /><path d="M3.700 4.200C5 1 10 .5 11.500 4L6 7z" fill="#b4b4b4" /></svg></TaskSlot>
    <TaskSlot $w={24}><ChromeIcon /></TaskSlot>
    <TaskSlot $w={24}>
      <svg width="16" height="16" viewBox="0 0 16 16"><path d="M7.500 0C5 2 3 2 1 2v5c0 4 3 6.500 6.500 8C11 13.500 14 11 14 7V2C12 2 10 2 7.500 0z" fill="#fff" /><path d="M7.500 0v15M1 7h13" stroke="#2b2727" strokeWidth="1.200" /><path d="M11 6.500l5 9.500H6z" fill="#fbb900" /><path d="M11 9.500v3.300M11 13.600v1.200" stroke="#222" strokeWidth="1.200" /></svg>
    </TaskSlot>
    <TaskSlot $w={24}><svg width="14" height="14" viewBox="0 0 14 14"><path d="M0 0h14v14H0z" fill="#fff" /><path d="M0 4.500h14M0 9.300h14M7 4.500v9.500" stroke="#2b2727" /></svg></TaskSlot>
    <TaskSlot $w={24}>
      <svg width="12" height="16" viewBox="0 0 12 16" fill="none" stroke="#fff" strokeWidth="1.200"><path d="M2.500 2c2-1.500 5-1.500 7 0M2.500 14c2 1.500 5 1.500 7 0" /><rect x="1" y="4.700" width="7" height="6.600" rx="1.500" /><path d="M8 8l3-2.500v5z" /></svg>
    </TaskSlot>
    <TaskSlot $w={23}>
      <svg width="11" height="16" viewBox="0 0 11 16"><rect x="2.500" width="6" height="11" rx="1" fill="#fff" /><path d="M.6 7.500v3.500c0 2 1.500 2.500 4.900 2.500s4.900-.5 4.900-2.500V7.500M5.500 13v3" stroke="#fff" fill="none" strokeWidth="1.200" /></svg>
    </TaskSlot>
    <TaskSlot $w={26}>
      <svg width="13" height="13" viewBox="0 0 13 13" fill="none" stroke="#fff"><path d="M.7 12.500A12 12 0 0 1 12.500.7" stroke="#9b9797" /><path d="M3.700 12.500a9 9 0 0 1 8.800-8.800M6.500 12.500a6 6 0 0 1 6-6" strokeWidth="1.200" /><path d="M9 12.500a3.500 3.500 0 0 1 3.500-3.500" strokeWidth="1.200" /><circle cx="12" cy="12" r="1" fill="#fff" stroke="none" /></svg>
    </TaskSlot>
    <TaskSlot $w={22}>
      <svg width="16" height="13" viewBox="0 0 16 13" fill="none" stroke="#fff" strokeWidth="1.200"><path d="M1.500 0v2M4.500 0v2M.6 2.500h4.800V4c0 3-4.800 3-4.800 0zM3 6.500V9h2M7 3.500h7v7.500H5V8.500M14 6h1.500v3H14" /><path d="M7 5.500h5.500v3.800H7z" fill="#fff" stroke="none" /></svg>
    </TaskSlot>
    <TaskSlot $w={32}>
      <svg width="17" height="16" viewBox="0 0 17 16" fill="none" stroke="#fff" strokeWidth="1.200"><path d="M5 12L10.500 1.500c1-1.500 3-.5 2.300 1L7.500 13 5 15zM4.500 9.500c-3 0-4.500 2-3 4 1 1 2.500.5 3-.5M9 12c2.500 0 2-4 5-4.500 2-.2 2 2 .3 2S12 7.500 10.500 6.500" /></svg>
    </TaskSlot>
    <TaskSlot $w={62}><Label $size={12} $ls={-0.2}>7:16 AM</Label></TaskSlot>
    <TaskSlot $w={40} $mr={8}>
      <svg width="17" height="16" viewBox="0 0 17 16"><path d="M0 0h17v9.500l-2 2.500H7l-3 3.500V12H0z" fill="#fff" /><path d="M3 3h11M3 5.500h11M3 8h7" stroke="#2e2929" /><path d="M13.500 8v5.500M13.500 8l2.500 1.500" stroke="#2e2929" strokeWidth="2.400" /><circle cx="12" cy="13.500" r="2" fill="#fff" stroke="#2e2929" strokeWidth=".8" /><path d="M13.500 8v5.500M13.500 8l2.500 1.500" stroke="#fff" /></svg>
    </TaskSlot>
  </Taskbar>
);

const MeetingControls = () => (
  <MeetingBar>
    <MeetingItem $w={70}>
      <MeetingIcon><Mic /></MeetingIcon><MeetingLabel>Mute</MeetingLabel>
      <Corner $dx={24} $top={12}><Chevron w={9} h={5} sw={1.500} /></Corner>
    </MeetingItem>
    <MeetingItem $w={106}>
      <MeetingIcon><svg width="25" height="15" viewBox="0 0 25 15" fill="#b0b0b0"><rect y="0" width="17.500" height="15" rx="3" /><path d="M19 5.500L22 2c.8-.8 2.200-.5 2.200.8v9.400c0 1.300-1.400 1.600-2.200.8L19 9.500z" /></svg></MeetingIcon>
      <MeetingLabel $ls={-0.05}>Stop Video</MeetingLabel>
      <Corner $dx={28} $top={12}><Chevron w={9} h={5} sw={1.500} /></Corner>
    </MeetingItem>
    <MeetingItem $w={74}>
      <MeetingIcon><svg width="24" height="18" viewBox="0 0 24 18" fill="#b0b0b0"><circle cx="7.500" cy="4" r="4" /><circle cx="17" cy="5" r="3.600" /><path d="M0 18v-3c0-3.500 2-5 4.500-5h5.500c2.500 0 4.500 1.500 4.500 5v3z" /><path d="M16 18v-4c0-1.500-.5-2.500-1.300-3.500H19c3 0 5 1.500 5 4.500v3z" /></svg></MeetingIcon>
      <MeetingLabel>Participants</MeetingLabel>
      <Corner $dx={13} $top={5}>2</Corner>
    </MeetingItem>
    <MeetingItem $w={108}>
      <MeetingIcon><svg width="20" height="18" viewBox="0 0 20 18"><path d="M3 0h14a3 3 0 0 1 3 3v8a3 3 0 0 1-3 3H9l-4 4v-4H3a3 3 0 0 1-3-3V3a3 3 0 0 1 3-3z" fill="#b0b0b0" /></svg></MeetingIcon>
      <MeetingLabel>Chat</MeetingLabel>
      <Corner $dx={28} $top={12}><Chevron w={9} h={5} sw={1.500} /></Corner>
    </MeetingItem>
    <MeetingItem $w={73} $green>
      <MeetingIcon><svg width="24" height="18" viewBox="0 0 24 18"><rect width="24" height="18" rx="2" fill="#23d959" /><path d="M12 13.500V5M8.300 8.500L12 4.800l3.700 3.700" stroke="#1c2b20" strokeWidth="1.800" fill="none" /></svg></MeetingIcon>
      <MeetingLabel $ls={-0.35}>New Share</MeetingLabel>
    </MeetingItem>
    <MeetingItem $w={104}>
      <MeetingIcon><svg width="14" height="16" viewBox="0 0 14 16"><path d="M1.500 0v16M12.500 0v16" stroke="#b0b0b0" strokeWidth="2.600" /></svg></MeetingIcon>
      <MeetingLabel $ls={-0.4}>Pause Share</MeetingLabel>
    </MeetingItem>
    <MeetingItem $w={59}>
      <MeetingIcon><svg width="18" height="18" viewBox="0 0 18 18" fill="#b0b0b0"><path d="M10.500 3.500l4 4L5 17l-4.500.8L1.200 13z" /><path d="M11.500 2.500l1.500-1.500c1-1 2-1 2.800-.2l1.400 1.400c.8.800.8 1.800-.2 2.800l-1.500 1.500z" /></svg></MeetingIcon>
      <MeetingLabel>Annotate</MeetingLabel>
    </MeetingItem>
    <MeetingItem $w={134}>
      <MeetingIcon><svg width="14" height="20" viewBox="0 0 14 20"><rect width="14" height="20" rx="5" fill="#b0b0b0" /><rect x="6" y="4.500" width="2" height="5.500" rx="1" fill="#242424" /></svg></MeetingIcon>
      <MeetingLabel>Remote Control</MeetingLabel>
    </MeetingItem>
    <MeetingItem $w={58}>
      <MeetingIcon><svg width="17" height="17" viewBox="0 0 17 17" fill="none" stroke="#b0b0b0" strokeWidth="1.600"><path d="M1 7V4c0-2 1-3 3-3h4M16 9v4c0 2-1 3-3 3H9" /><circle cx="13.500" cy="3.500" r="2.300" /><circle cx="3.500" cy="13.500" r="2.300" /></svg></MeetingIcon>
      <MeetingLabel>Apps</MeetingLabel>
    </MeetingItem>
    <MeetingItem $w={70} $ml={8}>
      <MeetingIcon><svg width="20" height="4" viewBox="0 0 20 4" fill="#b0b0b0"><circle cx="2" cy="2" r="1.900" /><circle cx="10" cy="2" r="1.900" /><circle cx="18" cy="2" r="1.900" /></svg></MeetingIcon>
      <MeetingLabel>More</MeetingLabel>
    </MeetingItem>
  </MeetingBar>
);

const App = () => (
  <>
    <GlobalStyle />
    <Desktop>
      <SharedFrame>
        <BrowserChrome />
        <Header />
        <Notifications />
        <ScrollBar>
          <svg width="5" height="8"><path d="M5 0v8L1 4z" fill="#a3a3a3" /></svg>
          <Thumb />
          <svg width="5" height="8"><path d="M0 0v8l4-4z" fill="#505050" /></svg>
        </ScrollBar>
        <TaskbarRow />
      </SharedFrame>
      <RunningStrip>
        <Running $w={28} $c="#76b9ed" />
        <Running $w={36} $c="#8cc4ec" />
        <Running $w={28} $c="#76b9ed" />
        <Running $w={36} $c="#f07a1c" />
        <Running $w={28} $c="#76b9ed" />
      </RunningStrip>
      <ShareBanner>
        <SharingStatus>
          <svg width="11" height="11" viewBox="0 0 11 11"><path d="M4 0L8 4.500H6.300C6.500 7.500 8 8.500 10 9v1.500C5.500 11 2 9 2 4.500H0z" fill="#0d5e22" /></svg>
          <Label $size={12} $weight={700} $ls={-0.5}>You are screen sharing</Label>
          <svg width="11" height="12" viewBox="0 0 11 12"><path d="M5.500 0L11 2v4c0 3-2.500 5-5.500 6C2.500 11 0 9 0 6V2z" fill="#145a26" /><path d="M3 5.800l2 2 3.300-3.300" stroke="#23d959" strokeWidth="1.400" fill="none" /></svg>
        </SharingStatus>
        <StopShare><StopSquare /><Label $size={11.500} $weight={700} $ls={-0.55}>Stop Share</Label></StopShare>
      </ShareBanner>
      <MeetingControls />
      <TalkingPanel>
        <ViewModes>
          <svg width="12" height="12"><rect y="9" width="12" height="3" rx="1" fill="#3a96f5" /></svg>
          <svg width="12" height="12"><rect y="4" width="12" height="8" rx="1" fill="#c6c6c6" /></svg>
          <svg width="12" height="12"><rect width="12" height="5" rx="1" fill="#c6c6c6" /><rect y="7" width="12" height="5" rx="1" fill="#c6c6c6" /></svg>
          <svg width="14" height="14" fill="#c6c6c6">{[0, 5, 10].map((y) => [0, 5, 10].map((x) => <rect key={`${x}-${y}`} x={x} y={y} width="4" height="4" rx="1" />))}</svg>
        </ViewModes>
        <Talking><Label $size={12} $ls={0.18}>Talking: Frelyn Baleña/Team Exp...</Label></Talking>
      </TalkingPanel>
    </Desktop>
  </>
);

export default App;
